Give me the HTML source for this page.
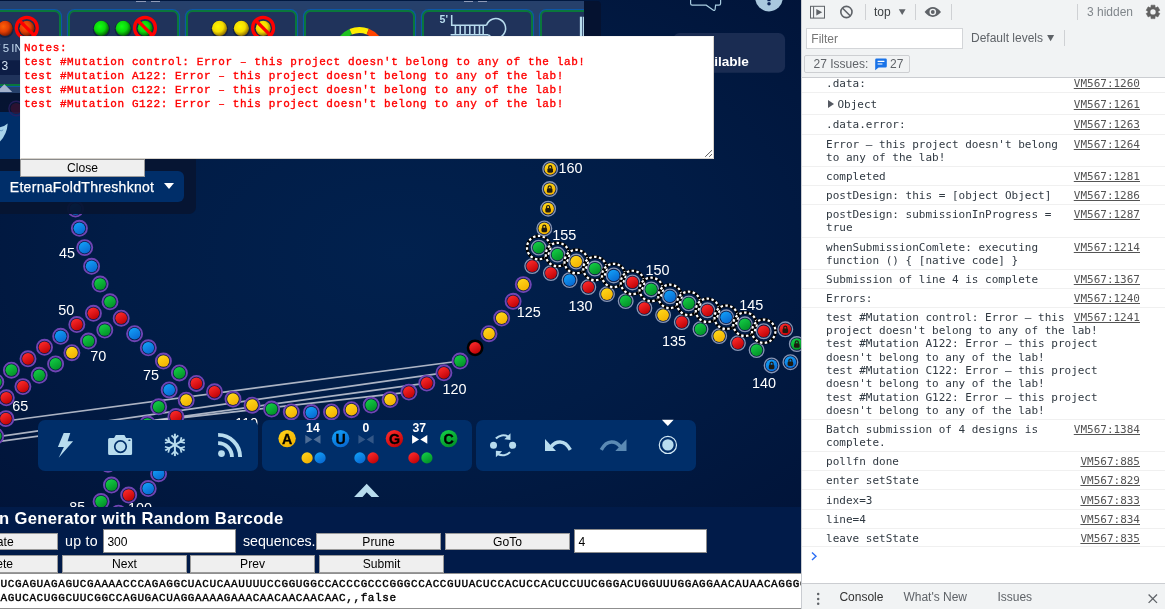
<!DOCTYPE html>
<html lang="en">
<head>
<meta charset="utf-8">
<title>Eterna – Mutation Generator with Random Barcode</title>
<style>
html,body{margin:0;padding:0;}
body{width:1165px;height:609px;overflow:hidden;position:relative;background:#011b49;font-family:"Liberation Sans",sans-serif;}
.abs{position:absolute;}
#dt,#notes,#seq,#title,.btn,.inp,.wt,#closebtn,#dd,#game{will-change:transform;}
#game{position:absolute;left:0;top:0;width:801px;height:507px;overflow:hidden;}
#gamesvg{position:absolute;left:0;top:0;}
/* top constraint bar */
#topdark{position:absolute;left:-10px;top:0.6px;width:611px;height:101px;background:#051230;border-radius:0 4px 9px 0;}
#topbar{position:absolute;left:0;top:1px;width:584px;height:91.5px;background:#26406b;overflow:hidden;}
.cbox{position:absolute;top:8.9px;width:107.6px;height:72px;border:2px solid #0a773c;border-radius:6.5px;background:#20335b;box-shadow:0 0 0 1.1px #0d56a6;}
.ball{position:absolute;width:15.4px;height:15.4px;border-radius:50%;top:20.6px;}
.nosign{position:absolute;width:19.6px;height:19.6px;border-radius:50%;border:3px solid #f00;top:15.4px;box-sizing:content-box;}
.nosign:after{content:"";position:absolute;left:8.3px;top:-1.2px;width:3px;height:22px;background:#f00;transform:rotate(-45deg);}
/* left panel */
#leftdark{position:absolute;left:-10px;top:92.5px;width:205.5px;height:121.8px;background:#061532;border-radius:0 0 7px 0;opacity:.96}
#leftblue{position:absolute;left:-10px;top:112.2px;width:110px;height:46.9px;background:#002e69;}
#dd{position:absolute;left:-10px;top:171.4px;width:194px;height:31px;background:#002e69;border-radius:6px;color:#fff;}
#dd span{-webkit-text-stroke:0.25px #fff;position:absolute;left:19.8px;top:7.9px;font-size:14px;white-space:nowrap;letter-spacing:0.3px}
#dd i{position:absolute;left:174.3px;top:12.4px;width:0;height:0;border-left:5.1px solid transparent;border-right:5.1px solid transparent;border-top:6.6px solid #fff;}
/* notes textarea */
#notes{position:absolute;left:20.1px;top:36.1px;width:694.1px;height:122.9px;box-sizing:border-box;background:#fff;border:1px solid #d6d2cc;border-top-color:#f4f4f4;border-left-color:#f4f4f4;color:#f00;font-family:"Liberation Mono",monospace;font-size:11px;letter-spacing:0.6px;line-height:14px;padding:4.3px 0 0 2.9px;-webkit-text-stroke:0.36px #f00;white-space:pre;overflow:hidden;}
#closebtn{position:absolute;left:20.1px;top:158.6px;width:124.9px;height:18.1px;box-sizing:border-box;background:#efefef;border:1px solid #9b9b9b;border-top:1.5px solid #8a8a8a;font-size:12.1px;color:#000;text-align:center;line-height:16.4px;}
/* toolbars */
.tb{position:absolute;top:420px;height:50.8px;background:#002e69;border-radius:7px;}
.ic{position:absolute;}
/* bottom html panel */
#bottom{position:absolute;left:0;top:506.5px;width:801px;height:103px;background:#011b49;}
#title{position:absolute;left:-1.5px;top:508.7px;font-size:16.6px;font-weight:bold;color:#fff;white-space:nowrap;letter-spacing:0.35px}
.btn{position:absolute;height:17.2px;width:125px;box-sizing:border-box;background:#efefef;border:1px solid #9a9a9a;border-radius:0;font-size:12.1px;color:#000;text-align:center;line-height:16.6px;}
.inp{position:absolute;height:23.5px;box-sizing:border-box;background:#fff;border:1px solid #8c8c8c;font-size:12.1px;color:#000;line-height:23.6px;padding-left:3.4px;padding-top:1px;text-align:left;}
.wt{position:absolute;color:#fff;font-size:14.2px;white-space:nowrap;}
#seq{-webkit-text-stroke:0.4px #000;position:absolute;left:-21.7px;top:573.3px;width:860px;height:35.7px;padding-top:3.3px;box-sizing:border-box;background:#fff;border:1px solid #8f8f8f;color:#000;font-family:"Liberation Mono",monospace;font-size:11px;letter-spacing:0.6px;line-height:14.1px;white-space:pre;overflow:hidden;}
/* devtools */
#dt{position:absolute;left:801px;top:0;width:364px;height:609px;background:#fff;font-family:"Liberation Sans",sans-serif;}
#dtbar{position:absolute;left:0;top:0;width:364px;height:77px;background:#f1f3f4;border-bottom:1px solid #cbcdd1;box-sizing:content-box;}
.vsep{position:absolute;width:1px;background:#cfd1d4;top:4px;height:16px;}
.dtt{position:absolute;font-size:12px;color:#5f6368;white-space:nowrap;}
.cl{position:absolute;left:25.1px;font-family:"DejaVu Sans Mono",monospace;font-size:11px;line-height:13.3px;color:#303942;white-space:pre;}
.lk{position:absolute;right:25px;font-family:"DejaVu Sans Mono",monospace;font-size:11px;line-height:13.3px;color:#545454;text-decoration:underline;white-space:pre;}
.sep{position:absolute;left:0;width:364px;height:1px;background:#f0f0f0;}
.tri{font-size:8px;color:#6e6e6e;font-family:"DejaVu Sans",sans-serif;position:relative;top:-1px}
#drawer{position:absolute;left:0;top:582.5px;width:364px;height:27px;background:#f1f3f4;border-top:1px solid #cbcdd1;}
</style>
</head>
<body>
<div id="game">
<svg id="gamesvg" width="801" height="507" viewBox="0 0 801 507">
<defs>
<radialGradient id="bg" cx="50%" cy="50%" r="72%"><stop offset="0" stop-color="#01214e"/><stop offset="0.5" stop-color="#011c46"/><stop offset="1" stop-color="#011439"/></radialGradient>
<linearGradient id="gA" x1="0.2" y1="0" x2="0.8" y2="1"><stop offset="0" stop-color="#ffd81a"/><stop offset="1" stop-color="#f2b000"/></linearGradient>
<linearGradient id="gU" x1="0.2" y1="0" x2="0.8" y2="1"><stop offset="0" stop-color="#12a0f8"/><stop offset="1" stop-color="#0866cf"/></linearGradient>
<linearGradient id="gG" x1="0.2" y1="0" x2="0.8" y2="1"><stop offset="0" stop-color="#ff2c2c"/><stop offset="1" stop-color="#bc0004"/></linearGradient>
<linearGradient id="gC" x1="0.2" y1="0" x2="0.8" y2="1"><stop offset="0" stop-color="#14cf46"/><stop offset="1" stop-color="#028e26"/></linearGradient>
</defs>
<rect width="801" height="507" fill="url(#bg)"/>
<line x1="460.1" y1="361" x2="6" y2="421.0" stroke="#dcdfe8" stroke-opacity="0.78" stroke-width="1.7"/>
<line x1="443.9" y1="372.8" x2="-4.3" y2="436.9" stroke="#dcdfe8" stroke-opacity="0.78" stroke-width="1.7"/>
<line x1="426.8" y1="383.1" x2="-10" y2="442.8" stroke="#dcdfe8" stroke-opacity="0.78" stroke-width="1.7"/>
<line x1="408.9" y1="392.1" x2="147.5" y2="421.6" stroke="#dcdfe8" stroke-opacity="0.78" stroke-width="1.7"/>
<circle cx="75.5" cy="209" r="7.55" fill="#0a1a45" stroke="#7045b4" stroke-width="1.85"/><circle cx="75.5" cy="209" r="5.85" fill="url(#gU)"/>
<circle cx="79.4" cy="228.3" r="7.55" fill="#0a1a45" stroke="#7045b4" stroke-width="1.85"/><circle cx="79.4" cy="228.3" r="5.85" fill="url(#gU)"/>
<circle cx="84.7" cy="247.6" r="7.55" fill="#0a1a45" stroke="#7045b4" stroke-width="1.85"/><circle cx="84.7" cy="247.6" r="5.85" fill="url(#gU)"/>
<circle cx="91.6" cy="266.3" r="7.55" fill="#0a1a45" stroke="#7045b4" stroke-width="1.85"/><circle cx="91.6" cy="266.3" r="5.85" fill="url(#gU)"/>
<circle cx="100.1" cy="284" r="7.55" fill="#0a1a45" stroke="#7045b4" stroke-width="1.85"/><circle cx="100.1" cy="284" r="5.85" fill="url(#gC)"/>
<circle cx="110" cy="301.8" r="7.55" fill="#0a1a45" stroke="#7045b4" stroke-width="1.85"/><circle cx="110" cy="301.8" r="5.85" fill="url(#gC)"/>
<circle cx="93.4" cy="313.3" r="7.55" fill="#0a1a45" stroke="#7045b4" stroke-width="1.85"/><circle cx="93.4" cy="313.3" r="5.85" fill="url(#gG)"/>
<circle cx="121.2" cy="318.2" r="7.55" fill="#0a1a45" stroke="#7045b4" stroke-width="1.85"/><circle cx="121.2" cy="318.2" r="5.85" fill="url(#gG)"/>
<circle cx="76.8" cy="324.5" r="7.55" fill="#0a1a45" stroke="#7045b4" stroke-width="1.85"/><circle cx="76.8" cy="324.5" r="5.85" fill="url(#gG)"/>
<circle cx="104.8" cy="330" r="7.55" fill="#0a1a45" stroke="#7045b4" stroke-width="1.85"/><circle cx="104.8" cy="330" r="5.85" fill="url(#gC)"/>
<circle cx="60.7" cy="336.3" r="7.55" fill="#0a1a45" stroke="#7045b4" stroke-width="1.85"/><circle cx="60.7" cy="336.3" r="5.85" fill="url(#gU)"/>
<circle cx="88.5" cy="341" r="7.55" fill="#0a1a45" stroke="#7045b4" stroke-width="1.85"/><circle cx="88.5" cy="341" r="5.85" fill="url(#gC)"/>
<circle cx="134.6" cy="333.7" r="7.55" fill="#0a1a45" stroke="#7045b4" stroke-width="1.85"/><circle cx="134.6" cy="333.7" r="5.85" fill="url(#gU)"/>
<circle cx="148.3" cy="347.8" r="7.55" fill="#0a1a45" stroke="#7045b4" stroke-width="1.85"/><circle cx="148.3" cy="347.8" r="5.85" fill="url(#gU)"/>
<circle cx="44.5" cy="347.3" r="7.55" fill="#0a1a45" stroke="#7045b4" stroke-width="1.85"/><circle cx="44.5" cy="347.3" r="5.85" fill="url(#gG)"/>
<circle cx="71.9" cy="352.7" r="7.55" fill="#0a1a45" stroke="#7045b4" stroke-width="1.85"/><circle cx="71.9" cy="352.7" r="5.85" fill="url(#gA)"/>
<circle cx="163.4" cy="361" r="7.55" fill="#0a1a45" stroke="#7045b4" stroke-width="1.85"/><circle cx="163.4" cy="361" r="5.85" fill="url(#gA)"/>
<circle cx="28" cy="358.8" r="7.55" fill="#0a1a45" stroke="#7045b4" stroke-width="1.85"/><circle cx="28" cy="358.8" r="5.85" fill="url(#gG)"/>
<circle cx="55.6" cy="363.9" r="7.55" fill="#0a1a45" stroke="#7045b4" stroke-width="1.85"/><circle cx="55.6" cy="363.9" r="5.85" fill="url(#gC)"/>
<circle cx="11.4" cy="370.2" r="7.55" fill="#0a1a45" stroke="#7045b4" stroke-width="1.85"/><circle cx="11.4" cy="370.2" r="5.85" fill="url(#gC)"/>
<circle cx="179.4" cy="372.9" r="7.55" fill="#0a1a45" stroke="#7045b4" stroke-width="1.85"/><circle cx="179.4" cy="372.9" r="5.85" fill="url(#gC)"/>
<circle cx="39.2" cy="375.3" r="7.55" fill="#0a1a45" stroke="#7045b4" stroke-width="1.85"/><circle cx="39.2" cy="375.3" r="5.85" fill="url(#gC)"/>
<circle cx="196.4" cy="383.4" r="7.55" fill="#0a1a45" stroke="#7045b4" stroke-width="1.85"/><circle cx="196.4" cy="383.4" r="5.85" fill="url(#gG)"/>
<circle cx="-4.2" cy="382" r="7.55" fill="#0a1a45" stroke="#7045b4" stroke-width="1.85"/><circle cx="-4.2" cy="382" r="5.85" fill="url(#gC)"/>
<circle cx="22.9" cy="386.6" r="7.55" fill="#0a1a45" stroke="#7045b4" stroke-width="1.85"/><circle cx="22.9" cy="386.6" r="5.85" fill="url(#gG)"/>
<circle cx="169.2" cy="389.9" r="7.55" fill="#0a1a45" stroke="#7045b4" stroke-width="1.85"/><circle cx="169.2" cy="389.9" r="5.85" fill="url(#gU)"/>
<circle cx="6.3" cy="397.8" r="7.55" fill="#0a1a45" stroke="#7045b4" stroke-width="1.85"/><circle cx="6.3" cy="397.8" r="5.85" fill="url(#gG)"/>
<circle cx="186.2" cy="400.2" r="7.55" fill="#0a1a45" stroke="#7045b4" stroke-width="1.85"/><circle cx="186.2" cy="400.2" r="5.85" fill="url(#gA)"/>
<circle cx="158.7" cy="406.8" r="7.55" fill="#0a1a45" stroke="#7045b4" stroke-width="1.85"/><circle cx="158.7" cy="406.8" r="5.85" fill="url(#gC)"/>
<circle cx="214.5" cy="391.8" r="7.55" fill="#0a1a45" stroke="#7045b4" stroke-width="1.85"/><circle cx="214.5" cy="391.8" r="5.85" fill="url(#gG)"/>
<circle cx="233" cy="399.1" r="7.55" fill="#0a1a45" stroke="#7045b4" stroke-width="1.85"/><circle cx="233" cy="399.1" r="5.85" fill="url(#gA)"/>
<circle cx="252.1" cy="405.2" r="7.55" fill="#0a1a45" stroke="#7045b4" stroke-width="1.85"/><circle cx="252.1" cy="405.2" r="5.85" fill="url(#gA)"/>
<circle cx="271.6" cy="409" r="7.55" fill="#0a1a45" stroke="#7045b4" stroke-width="1.85"/><circle cx="271.6" cy="409" r="5.85" fill="url(#gC)"/>
<circle cx="291.3" cy="411.9" r="7.55" fill="#0a1a45" stroke="#7045b4" stroke-width="1.85"/><circle cx="291.3" cy="411.9" r="5.85" fill="url(#gA)"/>
<circle cx="311.4" cy="412.5" r="7.55" fill="#0a1a45" stroke="#7045b4" stroke-width="1.85"/><circle cx="311.4" cy="412.5" r="5.85" fill="url(#gU)"/>
<circle cx="331.5" cy="411.9" r="7.55" fill="#0a1a45" stroke="#7045b4" stroke-width="1.85"/><circle cx="331.5" cy="411.9" r="5.85" fill="url(#gA)"/>
<circle cx="351.5" cy="409.7" r="7.55" fill="#0a1a45" stroke="#7045b4" stroke-width="1.85"/><circle cx="351.5" cy="409.7" r="5.85" fill="url(#gA)"/>
<circle cx="371.2" cy="405.1" r="7.55" fill="#0a1a45" stroke="#7045b4" stroke-width="1.85"/><circle cx="371.2" cy="405.1" r="5.85" fill="url(#gC)"/>
<circle cx="390.1" cy="399.6" r="7.55" fill="#0a1a45" stroke="#7045b4" stroke-width="1.85"/><circle cx="390.1" cy="399.6" r="5.85" fill="url(#gA)"/>
<circle cx="408.9" cy="392.1" r="7.55" fill="#0a1a45" stroke="#7045b4" stroke-width="1.85"/><circle cx="408.9" cy="392.1" r="5.85" fill="url(#gG)"/>
<circle cx="426.8" cy="383.1" r="7.55" fill="#0a1a45" stroke="#7045b4" stroke-width="1.85"/><circle cx="426.8" cy="383.1" r="5.85" fill="url(#gG)"/>
<circle cx="443.9" cy="372.8" r="7.55" fill="#0a1a45" stroke="#7045b4" stroke-width="1.85"/><circle cx="443.9" cy="372.8" r="5.85" fill="url(#gG)"/>
<circle cx="460.1" cy="361" r="7.55" fill="#0a1a45" stroke="#7045b4" stroke-width="1.85"/><circle cx="460.1" cy="361" r="5.85" fill="url(#gC)"/>
<circle cx="489" cy="333.7" r="7.55" fill="#0a1a45" stroke="#7045b4" stroke-width="1.85"/><circle cx="489" cy="333.7" r="5.85" fill="url(#gA)"/>
<circle cx="501.7" cy="318.1" r="7.55" fill="#0a1a45" stroke="#7045b4" stroke-width="1.85"/><circle cx="501.7" cy="318.1" r="5.85" fill="url(#gA)"/>
<circle cx="513.1" cy="301.3" r="7.55" fill="#0a1a45" stroke="#7045b4" stroke-width="1.85"/><circle cx="513.1" cy="301.3" r="5.85" fill="url(#gG)"/>
<circle cx="523.3" cy="284.6" r="7.55" fill="#0a1a45" stroke="#7045b4" stroke-width="1.85"/><circle cx="523.3" cy="284.6" r="5.85" fill="url(#gA)"/>
<circle cx="175.9" cy="416.5" r="7.55" fill="#0a1a45" stroke="#7045b4" stroke-width="1.85"/><circle cx="175.9" cy="416.5" r="5.85" fill="url(#gG)"/>
<circle cx="147.5" cy="424" r="7.55" fill="#0a1a45" stroke="#7045b4" stroke-width="1.85"/><circle cx="147.5" cy="424" r="5.85" fill="url(#gC)"/>
<circle cx="5.9" cy="418.6" r="7.55" fill="#0a1a45" stroke="#7045b4" stroke-width="1.85"/><circle cx="5.9" cy="418.6" r="5.85" fill="url(#gG)"/>
<circle cx="-4.3" cy="436.2" r="7.55" fill="#0a1a45" stroke="#7045b4" stroke-width="1.85"/><circle cx="-4.3" cy="436.2" r="5.85" fill="url(#gC)"/>
<circle cx="108" cy="464.3" r="7.55" fill="#0a1a45" stroke="#7045b4" stroke-width="1.85"/><circle cx="108" cy="464.3" r="5.85" fill="url(#gU)"/>
<circle cx="111.5" cy="485" r="7.55" fill="#0a1a45" stroke="#7045b4" stroke-width="1.85"/><circle cx="111.5" cy="485" r="5.85" fill="url(#gC)"/>
<circle cx="101.1" cy="501.5" r="7.55" fill="#0a1a45" stroke="#7045b4" stroke-width="1.85"/><circle cx="101.1" cy="501.5" r="5.85" fill="url(#gC)"/>
<circle cx="128.7" cy="495" r="7.55" fill="#0a1a45" stroke="#7045b4" stroke-width="1.85"/><circle cx="128.7" cy="495" r="5.85" fill="url(#gG)"/>
<circle cx="148.2" cy="488.5" r="7.55" fill="#0a1a45" stroke="#7045b4" stroke-width="1.85"/><circle cx="148.2" cy="488.5" r="5.85" fill="url(#gU)"/>
<circle cx="158.6" cy="473.7" r="7.55" fill="#0a1a45" stroke="#7045b4" stroke-width="1.85"/><circle cx="158.6" cy="473.7" r="5.85" fill="url(#gU)"/>
<circle cx="118.5" cy="513.2" r="7.55" fill="#0a1a45" stroke="#7045b4" stroke-width="1.85"/><circle cx="118.5" cy="513.2" r="5.85" fill="url(#gU)"/>
<circle cx="475.1" cy="347.8" r="7.6" fill="#000" stroke="#000" stroke-width="1.6"/><circle cx="475.1" cy="347.8" r="5.85" fill="url(#gG)"/>
<circle cx="532.2" cy="266.1" r="7.3" fill="#0a1a45" stroke="#8795b4" stroke-width="1.35"/><circle cx="532.2" cy="266.1" r="5.85" fill="url(#gG)"/>
<circle cx="550.9000000000001" cy="273.1" r="7.3" fill="#0a1a45" stroke="#8795b4" stroke-width="1.35"/><circle cx="550.9000000000001" cy="273.1" r="5.85" fill="url(#gG)"/>
<circle cx="569.6" cy="280.1" r="7.3" fill="#0a1a45" stroke="#8795b4" stroke-width="1.35"/><circle cx="569.6" cy="280.1" r="5.85" fill="url(#gU)"/>
<circle cx="588.3000000000001" cy="287.1" r="7.3" fill="#0a1a45" stroke="#8795b4" stroke-width="1.35"/><circle cx="588.3000000000001" cy="287.1" r="5.85" fill="url(#gG)"/>
<circle cx="607.0" cy="294.1" r="7.3" fill="#0a1a45" stroke="#8795b4" stroke-width="1.35"/><circle cx="607.0" cy="294.1" r="5.85" fill="url(#gA)"/>
<circle cx="625.7" cy="301.1" r="7.3" fill="#0a1a45" stroke="#8795b4" stroke-width="1.35"/><circle cx="625.7" cy="301.1" r="5.85" fill="url(#gC)"/>
<circle cx="644.4000000000001" cy="308.1" r="7.3" fill="#0a1a45" stroke="#8795b4" stroke-width="1.35"/><circle cx="644.4000000000001" cy="308.1" r="5.85" fill="url(#gG)"/>
<circle cx="663.1" cy="315.1" r="7.3" fill="#0a1a45" stroke="#8795b4" stroke-width="1.35"/><circle cx="663.1" cy="315.1" r="5.85" fill="url(#gA)"/>
<circle cx="681.8000000000001" cy="322.1" r="7.3" fill="#0a1a45" stroke="#8795b4" stroke-width="1.35"/><circle cx="681.8000000000001" cy="322.1" r="5.85" fill="url(#gG)"/>
<circle cx="700.5" cy="329.1" r="7.3" fill="#0a1a45" stroke="#8795b4" stroke-width="1.35"/><circle cx="700.5" cy="329.1" r="5.85" fill="url(#gC)"/>
<circle cx="719.2" cy="336.1" r="7.3" fill="#0a1a45" stroke="#8795b4" stroke-width="1.35"/><circle cx="719.2" cy="336.1" r="5.85" fill="url(#gA)"/>
<circle cx="737.9000000000001" cy="343.1" r="7.3" fill="#0a1a45" stroke="#8795b4" stroke-width="1.35"/><circle cx="737.9000000000001" cy="343.1" r="5.85" fill="url(#gG)"/>
<circle cx="756.6" cy="350.1" r="7.3" fill="#0a1a45" stroke="#8795b4" stroke-width="1.35"/><circle cx="756.6" cy="350.1" r="5.85" fill="url(#gC)"/>
<circle cx="538.7" cy="247.6" r="11.7" fill="none" stroke="#000" stroke-width="3.0"/><circle cx="538.7" cy="247.6" r="11.7" fill="none" stroke="#fff" stroke-width="2.2" stroke-dasharray="2.5 2.4"/><circle cx="538.7" cy="247.6" r="7.3" fill="#0a1a45" stroke="#8795b4" stroke-width="1.35"/><circle cx="538.7" cy="247.6" r="5.85" fill="url(#gC)"/>
<circle cx="557.45" cy="254.57" r="11.7" fill="none" stroke="#000" stroke-width="3.0"/><circle cx="557.45" cy="254.57" r="11.7" fill="none" stroke="#fff" stroke-width="2.2" stroke-dasharray="2.5 2.4"/><circle cx="557.45" cy="254.57" r="7.3" fill="#0a1a45" stroke="#8795b4" stroke-width="1.35"/><circle cx="557.45" cy="254.57" r="5.85" fill="url(#gC)"/>
<circle cx="576.2" cy="261.54" r="11.7" fill="none" stroke="#000" stroke-width="3.0"/><circle cx="576.2" cy="261.54" r="11.7" fill="none" stroke="#fff" stroke-width="2.2" stroke-dasharray="2.5 2.4"/><circle cx="576.2" cy="261.54" r="7.3" fill="#0a1a45" stroke="#8795b4" stroke-width="1.35"/><circle cx="576.2" cy="261.54" r="5.85" fill="url(#gA)"/>
<circle cx="594.95" cy="268.51" r="11.7" fill="none" stroke="#000" stroke-width="3.0"/><circle cx="594.95" cy="268.51" r="11.7" fill="none" stroke="#fff" stroke-width="2.2" stroke-dasharray="2.5 2.4"/><circle cx="594.95" cy="268.51" r="7.3" fill="#0a1a45" stroke="#8795b4" stroke-width="1.35"/><circle cx="594.95" cy="268.51" r="5.85" fill="url(#gC)"/>
<circle cx="613.7" cy="275.48" r="11.7" fill="none" stroke="#000" stroke-width="3.0"/><circle cx="613.7" cy="275.48" r="11.7" fill="none" stroke="#fff" stroke-width="2.2" stroke-dasharray="2.5 2.4"/><circle cx="613.7" cy="275.48" r="7.3" fill="#0a1a45" stroke="#8795b4" stroke-width="1.35"/><circle cx="613.7" cy="275.48" r="5.85" fill="url(#gU)"/>
<circle cx="632.45" cy="282.45" r="11.7" fill="none" stroke="#000" stroke-width="3.0"/><circle cx="632.45" cy="282.45" r="11.7" fill="none" stroke="#fff" stroke-width="2.2" stroke-dasharray="2.5 2.4"/><circle cx="632.45" cy="282.45" r="7.3" fill="#0a1a45" stroke="#8795b4" stroke-width="1.35"/><circle cx="632.45" cy="282.45" r="5.85" fill="url(#gG)"/>
<circle cx="651.2" cy="289.42" r="11.7" fill="none" stroke="#000" stroke-width="3.0"/><circle cx="651.2" cy="289.42" r="11.7" fill="none" stroke="#fff" stroke-width="2.2" stroke-dasharray="2.5 2.4"/><circle cx="651.2" cy="289.42" r="7.3" fill="#0a1a45" stroke="#8795b4" stroke-width="1.35"/><circle cx="651.2" cy="289.42" r="5.85" fill="url(#gC)"/>
<circle cx="669.95" cy="296.39" r="11.7" fill="none" stroke="#000" stroke-width="3.0"/><circle cx="669.95" cy="296.39" r="11.7" fill="none" stroke="#fff" stroke-width="2.2" stroke-dasharray="2.5 2.4"/><circle cx="669.95" cy="296.39" r="7.3" fill="#0a1a45" stroke="#8795b4" stroke-width="1.35"/><circle cx="669.95" cy="296.39" r="5.85" fill="url(#gU)"/>
<circle cx="688.7" cy="303.36" r="11.7" fill="none" stroke="#000" stroke-width="3.0"/><circle cx="688.7" cy="303.36" r="11.7" fill="none" stroke="#fff" stroke-width="2.2" stroke-dasharray="2.5 2.4"/><circle cx="688.7" cy="303.36" r="7.3" fill="#0a1a45" stroke="#8795b4" stroke-width="1.35"/><circle cx="688.7" cy="303.36" r="5.85" fill="url(#gC)"/>
<circle cx="707.45" cy="310.33" r="11.7" fill="none" stroke="#000" stroke-width="3.0"/><circle cx="707.45" cy="310.33" r="11.7" fill="none" stroke="#fff" stroke-width="2.2" stroke-dasharray="2.5 2.4"/><circle cx="707.45" cy="310.33" r="7.3" fill="#0a1a45" stroke="#8795b4" stroke-width="1.35"/><circle cx="707.45" cy="310.33" r="5.85" fill="url(#gG)"/>
<circle cx="726.2" cy="317.3" r="11.7" fill="none" stroke="#000" stroke-width="3.0"/><circle cx="726.2" cy="317.3" r="11.7" fill="none" stroke="#fff" stroke-width="2.2" stroke-dasharray="2.5 2.4"/><circle cx="726.2" cy="317.3" r="7.3" fill="#0a1a45" stroke="#8795b4" stroke-width="1.35"/><circle cx="726.2" cy="317.3" r="5.85" fill="url(#gU)"/>
<circle cx="744.95" cy="324.27" r="11.7" fill="none" stroke="#000" stroke-width="3.0"/><circle cx="744.95" cy="324.27" r="11.7" fill="none" stroke="#fff" stroke-width="2.2" stroke-dasharray="2.5 2.4"/><circle cx="744.95" cy="324.27" r="7.3" fill="#0a1a45" stroke="#8795b4" stroke-width="1.35"/><circle cx="744.95" cy="324.27" r="5.85" fill="url(#gC)"/>
<circle cx="763.7" cy="331.24" r="11.7" fill="none" stroke="#000" stroke-width="3.0"/><circle cx="763.7" cy="331.24" r="11.7" fill="none" stroke="#fff" stroke-width="2.2" stroke-dasharray="2.5 2.4"/><circle cx="763.7" cy="331.24" r="7.3" fill="#0a1a45" stroke="#8795b4" stroke-width="1.35"/><circle cx="763.7" cy="331.24" r="5.85" fill="url(#gG)"/>
<circle cx="550.2" cy="168.9" r="7.3" fill="#0a1a45" stroke="#8795b4" stroke-width="1.35"/><circle cx="550.2" cy="168.9" r="5.85" fill="url(#gA)"/>
<g transform="translate(550.2,168.9)" fill="#1e1a10"><rect x="-2.8" y="-0.7" width="5.6" height="4.5" rx="1.4"/><path d="M-1.5,-0.4 v-1.3 a1.5,1.5 0 0 1 3,0 v1.3" fill="none" stroke="#1e1a10" stroke-width="1.2"/></g>
<circle cx="549.7" cy="189" r="7.3" fill="#0a1a45" stroke="#8795b4" stroke-width="1.35"/><circle cx="549.7" cy="189" r="5.85" fill="url(#gA)"/>
<g transform="translate(549.7,189)" fill="#1e1a10"><rect x="-2.8" y="-0.7" width="5.6" height="4.5" rx="1.4"/><path d="M-1.5,-0.4 v-1.3 a1.5,1.5 0 0 1 3,0 v1.3" fill="none" stroke="#1e1a10" stroke-width="1.2"/></g>
<circle cx="548.1" cy="208.7" r="7.3" fill="#0a1a45" stroke="#8795b4" stroke-width="1.35"/><circle cx="548.1" cy="208.7" r="5.85" fill="url(#gA)"/>
<g transform="translate(548.1,208.7)" fill="#1e1a10"><rect x="-2.8" y="-0.7" width="5.6" height="4.5" rx="1.4"/><path d="M-1.5,-0.4 v-1.3 a1.5,1.5 0 0 1 3,0 v1.3" fill="none" stroke="#1e1a10" stroke-width="1.2"/></g>
<circle cx="544.3" cy="228.4" r="7.3" fill="#0a1a45" stroke="#8795b4" stroke-width="1.35"/><circle cx="544.3" cy="228.4" r="5.85" fill="url(#gA)"/>
<g transform="translate(544.3,228.4)" fill="#1e1a10"><rect x="-2.8" y="-0.7" width="5.6" height="4.5" rx="1.4"/><path d="M-1.5,-0.4 v-1.3 a1.5,1.5 0 0 1 3,0 v1.3" fill="none" stroke="#1e1a10" stroke-width="1.2"/></g>
<circle cx="785.3" cy="329.3" r="7.3" fill="#0a1a45" stroke="#8795b4" stroke-width="1.35"/><circle cx="785.3" cy="329.3" r="5.85" fill="url(#gG)"/>
<g transform="translate(785.3,329.3)" fill="#1e1a10"><rect x="-2.8" y="-0.7" width="5.6" height="4.5" rx="1.4"/><path d="M-1.5,-0.4 v-1.3 a1.5,1.5 0 0 1 3,0 v1.3" fill="none" stroke="#1e1a10" stroke-width="1.2"/></g>
<circle cx="796.8" cy="344" r="7.3" fill="#0a1a45" stroke="#8795b4" stroke-width="1.35"/><circle cx="796.8" cy="344" r="5.85" fill="url(#gC)"/>
<g transform="translate(796.8,344)" fill="#1e1a10"><rect x="-2.8" y="-0.7" width="5.6" height="4.5" rx="1.4"/><path d="M-1.5,-0.4 v-1.3 a1.5,1.5 0 0 1 3,0 v1.3" fill="none" stroke="#1e1a10" stroke-width="1.2"/></g>
<circle cx="790.4" cy="362.2" r="7.3" fill="#0a1a45" stroke="#8795b4" stroke-width="1.35"/><circle cx="790.4" cy="362.2" r="5.85" fill="url(#gU)"/>
<g transform="translate(790.4,362.2)" fill="#1e1a10"><rect x="-2.8" y="-0.7" width="5.6" height="4.5" rx="1.4"/><path d="M-1.5,-0.4 v-1.3 a1.5,1.5 0 0 1 3,0 v1.3" fill="none" stroke="#1e1a10" stroke-width="1.2"/></g>
<circle cx="771.6" cy="365.4" r="7.3" fill="#0a1a45" stroke="#8795b4" stroke-width="1.35"/><circle cx="771.6" cy="365.4" r="5.85" fill="url(#gU)"/>
<g transform="translate(771.6,365.4)" fill="#1e1a10"><rect x="-2.8" y="-0.7" width="5.6" height="4.5" rx="1.4"/><path d="M-1.5,-0.4 v-1.3 a1.5,1.5 0 0 1 3,0 v1.3" fill="none" stroke="#1e1a10" stroke-width="1.2"/></g>
<g font-family="'Liberation Sans', sans-serif" font-size="14.4" fill="#fff" text-anchor="middle">
<text x="67" y="258.2">45</text>
<text x="66.2" y="314.6">50</text>
<text x="98.2" y="360.9">70</text>
<text x="151" y="380.0">75</text>
<text x="20.2" y="410.7">65</text>
<text x="454.5" y="394.3">120</text>
<text x="528.7" y="316.7">125</text>
<text x="580.4" y="311.2">130</text>
<text x="673.9" y="345.9">135</text>
<text x="764" y="388.0">140</text>
<text x="751.2" y="310.1">145</text>
<text x="657.4" y="274.9">150</text>
<text x="564.2" y="240.1">155</text>
<text x="570.4" y="173.0">160</text>
<text x="246.5" y="428.1">110</text>
<text x="77.3" y="512.2">85</text>
<text x="140" y="512.9">100</text>
</g>
</svg>
<!-- top constraints -->
<div id="topdark"></div>
<div id="topbar">
  <div class="abs" style="left:136px;top:0px;width:10px;height:1px;background:#8f9bb8"></div><div class="abs" style="left:463.6px;top:0px;width:9.6px;height:1px;background:#8f9bb8"></div><div class="abs" style="left:478px;top:0px;width:9px;height:1px;background:#8f9bb8"></div>
  <div class="abs" style="left:151.3px;top:0px;width:8.7px;height:1px;background:#8f9bb8"></div>
  <div class="cbox" style="left:-50.2px"></div>
  <div class="cbox" style="left:67.8px"></div>
  <div class="cbox" style="left:185.8px"></div>
  <div class="cbox" style="left:303.8px"></div>
  <div class="cbox" style="left:421.8px"></div>
  <div class="cbox" style="left:539.8px;width:60px;border-right:none;border-radius:6px 0 0 6px"></div>
</div>
<svg class="abs" style="left:0;top:0" width="801" height="110" viewBox="0 0 801 110">
<defs>
<radialGradient id="bo" cx="0.38" cy="0.38" r="0.65"><stop offset="0" stop-color="#ff6008"/><stop offset="0.55" stop-color="#e23e04"/><stop offset="1" stop-color="#7c1c02"/></radialGradient>
<radialGradient id="bgn" cx="0.4" cy="0.38" r="0.65"><stop offset="0" stop-color="#12ff12"/><stop offset="0.55" stop-color="#0cd60c"/><stop offset="1" stop-color="#045c04"/></radialGradient>
<radialGradient id="by" cx="0.4" cy="0.38" r="0.65"><stop offset="0" stop-color="#fff600"/><stop offset="0.55" stop-color="#f4dc00"/><stop offset="1" stop-color="#8a6a00"/></radialGradient>
</defs>
<circle cx="-16.8" cy="29.2" r="8.6" fill="#0a1430" opacity="0.55"/><circle cx="-16.8" cy="28.3" r="7.6" fill="url(#bo)"/><circle cx="5.1" cy="29.2" r="8.6" fill="#0a1430" opacity="0.55"/><circle cx="5.1" cy="28.3" r="7.6" fill="url(#bo)"/><circle cx="27.0" cy="29.2" r="8.6" fill="#0a1430" opacity="0.55"/><circle cx="27.0" cy="28.3" r="7.6" fill="url(#bo)"/><circle cx="26.8" cy="27.9" r="10.5" fill="none" stroke="#f00" stroke-width="3.2"/><line x1="19.4" y1="20.5" x2="34.2" y2="35.3" stroke="#f00" stroke-width="3.2"/>
<circle cx="101.4" cy="29.2" r="8.6" fill="#0a1430" opacity="0.55"/><circle cx="101.4" cy="28.3" r="7.6" fill="url(#bgn)"/><circle cx="123.3" cy="29.2" r="8.6" fill="#0a1430" opacity="0.55"/><circle cx="123.3" cy="28.3" r="7.6" fill="url(#bgn)"/><circle cx="145.2" cy="29.2" r="8.6" fill="#0a1430" opacity="0.55"/><circle cx="145.2" cy="28.3" r="7.6" fill="url(#bgn)"/><circle cx="145.0" cy="27.9" r="10.5" fill="none" stroke="#f00" stroke-width="3.2"/><line x1="137.6" y1="20.5" x2="152.4" y2="35.3" stroke="#f00" stroke-width="3.2"/>
<circle cx="219.5" cy="29.2" r="8.6" fill="#0a1430" opacity="0.55"/><circle cx="219.5" cy="28.3" r="7.6" fill="url(#by)"/><circle cx="241.4" cy="29.2" r="8.6" fill="#0a1430" opacity="0.55"/><circle cx="241.4" cy="28.3" r="7.6" fill="url(#by)"/><circle cx="263.3" cy="29.2" r="8.6" fill="#0a1430" opacity="0.55"/><circle cx="263.3" cy="28.3" r="7.6" fill="url(#by)"/><circle cx="263.1" cy="27.9" r="10.5" fill="none" stroke="#f00" stroke-width="3.2"/><line x1="255.7" y1="20.5" x2="270.5" y2="35.3" stroke="#f00" stroke-width="3.2"/>
<path d="M337.83,48.18 A22,22 0 0 1 350.73,31.82" fill="none" stroke="#1fc01f" stroke-width="6"/>
<path d="M350.73,31.82 A22,22 0 0 1 367.74,31.60" fill="none" stroke="#ffee00" stroke-width="6"/>
<path d="M367.74,31.60 A22,22 0 0 1 381.17,48.18" fill="none" stroke="#ff4400" stroke-width="6"/>
<g fill="none" stroke="#b8dcee" stroke-width="1.55">
<path d="M451.7,14.9 V25.2 H486.5"/>
<path d="M450.6,34.8 H488.4"/>
<path d="M455.4,25.2 V34.8"/>
<path d="M460.2,25.2 V34.8"/>
<path d="M465,25.2 V34.8"/>
<path d="M469.8,25.2 V34.8"/>
<path d="M474.6,25.2 V34.8"/>
<path d="M479.5,25.2 V34.8"/>
<path d="M483.2,25.2 V34.8"/>
<path d="M486.5,25.2 A9.8,9.8 0 1 1 488.4,34.8"/>
<path d="M581,16.7 V40" stroke-width="2.3"/><path d="M583.4,16.7 V40" stroke-width="1.1"/>
</g>
<text x="439.6" y="22.8" font-family="'Liberation Sans',sans-serif" font-weight="bold" font-size="10.6" fill="#b8dcee">5'</text>
<text x="-6.4" y="52.3" font-family="'Liberation Sans',sans-serif" font-size="11.4" fill="#c4daf0" word-spacing="-0.9" style="white-space:pre">T 5 IN A ROW</text>
<rect x="-30" y="60.3" width="70" height="14.7" fill="#0d1d45"/>
<text x="1.6" y="70.4" font-family="'Liberation Sans',sans-serif" font-size="12" fill="#d4e2f2">3</text>
<path d="M-3.4,91.9 L4.4,84.3 L12.2,91.9 Z" fill="#a4b2cc"/>
<path d="M690.6,-4 V3.6 Q690.6,5.2 692.2,5.2 H706.2 L713.4,10.2 Q714.8,10.9 715.1,9.4 L715.6,5.2 H719 Q720.6,5.2 720.6,3.6 V-4" fill="none" stroke="#a8cce0" stroke-width="1.2"/>
<circle cx="769" cy="-2.4" r="13.8" fill="#a9c8de"/>
<circle cx="769" cy="3.7" r="1.75" fill="#0c2356"/>
<rect x="767.4" y="-4" width="3.2" height="5.2" fill="#0c2356"/>
<rect x="673.1" y="33.1" width="112" height="39.6" rx="6.5" fill="#1a2c52"/>
<text x="748.9" y="65.5" text-anchor="end" font-family="'Liberation Sans',sans-serif" font-weight="bold" font-size="13.6" fill="#fff">Unavailable</text>
</svg>
<!-- left panel -->
<div id="leftdark"></div>
<div id="leftblue"></div>
<svg class="abs" style="left:0;top:95px" width="30" height="60" viewBox="0 95 30 60"><circle cx="16.2" cy="108.5" r="7.3" fill="none" stroke="#2b1f63" stroke-width="1.4" opacity="0.8"/><circle cx="16.2" cy="108.5" r="5.6" fill="#3a1232" opacity="0.75"/><path d="M0,127.2 Q4.5,126.6 7.7,123.6 Q7,134.5 0,141.6 Z" fill="#a8d4ec"/><path d="M0,130.5 Q2.2,131.5 3.2,129.6" stroke="#5f93bf" stroke-width="0.9" fill="none"/></svg>
<div id="dd"><span>EternaFoldThreshknot</span><i></i></div>
</div>

<div id="notes">Notes:
test #Mutation control: Error – this project doesn't belong to any of the lab!
test #Mutation A122: Error – this project doesn't belong to any of the lab!
test #Mutation C122: Error – this project doesn't belong to any of the lab!
test #Mutation G122: Error – this project doesn't belong to any of the lab!</div>
<svg class="abs" style="left:700px;top:146px" width="14" height="13" viewBox="700 146 14 13"><path d="M705.2,156.8 L712,150.2 M709.2,156.8 L712,154.1" stroke="#4a4a4a" stroke-width="0.9" fill="none"/></svg>
<div id="closebtn">Close</div>

<!-- toolbars -->
<div class="tb" style="left:38.3px;width:219.3px"></div>
<div class="tb" style="left:262.2px;width:210px"></div>
<div class="tb" style="left:476px;width:220.2px"></div>

<svg class="abs" style="left:0;top:410px" width="801" height="97" viewBox="0 410 801 97">
<defs>
<linearGradient id="tA" x1="0.2" y1="0" x2="0.8" y2="1"><stop offset="0" stop-color="#ffd21a"/><stop offset="1" stop-color="#f0b000"/></linearGradient>
<linearGradient id="tU" x1="0.2" y1="0" x2="0.8" y2="1"><stop offset="0" stop-color="#12a0f8"/><stop offset="1" stop-color="#0866cf"/></linearGradient>
<linearGradient id="tG" x1="0.2" y1="0" x2="0.8" y2="1"><stop offset="0" stop-color="#ff2c2c"/><stop offset="1" stop-color="#bc0004"/></linearGradient>
<linearGradient id="tC" x1="0.2" y1="0" x2="0.8" y2="1"><stop offset="0" stop-color="#14cf46"/><stop offset="1" stop-color="#028e26"/></linearGradient>
</defs>
<path d="M63.7,433 L70.3,433 L67.6,441.3 L73.1,441.3 L58.7,457.8 L63.9,446.9 L57.9,446.9 Z" fill="#b8dcee"/>
<path d="M109.6,438 H114.1 L115.8,435 H124.4 L126.1,438 H130.6 Q132.1,438 132.1,439.5 V453.5 Q132.1,455 130.6,455 H109.6 Q108.1,455 108.1,453.5 V439.5 Q108.1,438 109.6,438 Z" fill="#b8dcee"/>
<circle cx="120.5" cy="446.6" r="5.75" fill="none" stroke="#002e69" stroke-width="1.7"/>
<ellipse cx="129.4" cy="440.2" rx="1.2" ry="0.8" fill="#002e69"/>
<g stroke="#b8dcee" stroke-width="2" fill="none" stroke-linecap="butt"><path d="M174.90,444.90 L174.90,433.70"/><path d="M171.50,435.30 L174.90,438.70 L178.30,435.30" stroke-width="1.7"/><path d="M174.90,444.90 L184.60,439.30"/><path d="M181.51,437.16 L180.27,441.80 L184.91,443.04" stroke-width="1.7"/><path d="M174.90,444.90 L184.60,450.50"/><path d="M184.91,446.76 L180.27,448.00 L181.51,452.64" stroke-width="1.7"/><path d="M174.90,444.90 L174.90,456.10"/><path d="M178.30,454.50 L174.90,451.10 L171.50,454.50" stroke-width="1.7"/><path d="M174.90,444.90 L165.20,450.50"/><path d="M168.29,452.64 L169.53,448.00 L164.89,446.76" stroke-width="1.7"/><path d="M174.90,444.90 L165.20,439.30"/><path d="M164.89,443.04 L169.53,441.80 L168.29,437.16" stroke-width="1.7"/></g>
<circle cx="221.5" cy="453.6" r="3.4" fill="#b8dcee"/>
<path d="M218.1,443.09999999999997 A13.8,13.8 0 0 1 231.9,456.9" fill="none" stroke="#b8dcee" stroke-width="3.9"/>
<path d="M218.1,434.9 A22,22 0 0 1 240.1,456.9" fill="none" stroke="#b8dcee" stroke-width="3.9"/>
<circle cx="287.1" cy="438.6" r="8.7" fill="url(#tA)"/><text x="287.1" y="443.7" text-anchor="middle" font-family="'Liberation Sans',sans-serif" font-weight="bold" font-size="14.2" fill="#000" stroke="#000" stroke-width="0.3">A</text>
<circle cx="340.6" cy="438.6" r="8.7" fill="url(#tU)"/><text x="340.6" y="443.7" text-anchor="middle" font-family="'Liberation Sans',sans-serif" font-weight="bold" font-size="14.2" fill="#000" stroke="#000" stroke-width="0.3">U</text>
<circle cx="394.4" cy="438.6" r="8.7" fill="url(#tG)"/><text x="394.4" y="443.7" text-anchor="middle" font-family="'Liberation Sans',sans-serif" font-weight="bold" font-size="14.2" fill="#000" stroke="#000" stroke-width="0.3">G</text>
<circle cx="448.7" cy="438.6" r="8.7" fill="url(#tC)"/><text x="448.7" y="443.7" text-anchor="middle" font-family="'Liberation Sans',sans-serif" font-weight="bold" font-size="14.2" fill="#000" stroke="#000" stroke-width="0.3">C</text>
<path d="M305.3,435 L312.3,439.4 L305.3,443.8 Z M320.5,435 L313.5,439.4 L320.5,443.8 Z" fill="#fff" opacity="0.3"/>
<path d="M358.4,435 L365.4,439.4 L358.4,443.8 Z M373.6,435 L366.6,439.4 L373.6,443.8 Z" fill="#fff" opacity="0.2"/>
<path d="M412.09999999999997,435 L419.09999999999997,439.4 L412.09999999999997,443.8 Z M427.3,435 L420.3,439.4 L427.3,443.8 Z" fill="#fff" opacity="1"/>
<g font-family="'Liberation Sans',sans-serif" font-weight="bold" font-size="12.2" fill="#fff" text-anchor="middle">
<text x="312.9" y="432">14</text><text x="366" y="432">0</text><text x="419.3" y="432">37</text></g>
<circle cx="307.1" cy="457.9" r="5.6" fill="url(#tA)"/><circle cx="320.1" cy="457.9" r="5.6" fill="url(#tU)"/><circle cx="359.9" cy="457.9" r="5.6" fill="url(#tU)"/><circle cx="373" cy="457.9" r="5.6" fill="url(#tG)"/><circle cx="413.9" cy="457.9" r="5.6" fill="url(#tG)"/><circle cx="426.9" cy="457.9" r="5.6" fill="url(#tC)"/>
<circle cx="493.5" cy="445.3" r="3.5" fill="#b8dcee"/><circle cx="512.6" cy="445.3" r="3.5" fill="#b8dcee"/>
<path d="M495.9,438.5 A10.1,10.1 0 0 1 508.2,436.6" fill="none" stroke="#b8dcee" stroke-width="2.1"/>
<path d="M510.5,433.3 L510.5,439.9 L504.3,439.3 Z" fill="#b8dcee"/>
<path d="M510.1,452.1 A10.1,10.1 0 0 1 497.8,454" fill="none" stroke="#b8dcee" stroke-width="2.1"/>
<path d="M495.9,457.3 L495.9,450.7 L502.1,451.3 Z" fill="#b8dcee"/>
<path d="M545,438.9 L545,450.9 L556,450.9 Z" fill="#b8dcee"/>
<path d="M551.2,446.6 C555.5,441 564.5,438.6 570.3,449.9" fill="none" stroke="#b8dcee" stroke-width="3.5"/>
<path d="M626.5,439.3 L626.5,450.9 L615.3,450.9 Z" fill="#5b8ab4"/>
<path d="M620.4,446.6 C616.1,441 607.1,438.6 601.3,449.9" fill="none" stroke="#5b8ab4" stroke-width="3.5"/>
<circle cx="667.9" cy="444.9" r="8.6" fill="none" stroke="#d2e9f5" stroke-width="1.2"/><circle cx="667.9" cy="444.9" r="5.7" fill="#b8dcee"/>
<path d="M661.9,419.8 L673.7,419.8 L667.8,426 Z" fill="#fff"/>
<path d="M354.1,497 L366.7,483.8 L379.3,497 L371.5,497 L366.7,492.2 L362.5,497 Z" fill="#b8dcee"/>
</svg>
<!-- bottom panel -->
<div id="bottom"></div>
<div id="title">n Generator with Random Barcode</div>
<div class="btn" style="left:-67px;top:533.4px">Create</div>
<div class="wt" style="left:65.3px;top:533.4px;letter-spacing:0.3px">up to</div>
<div class="inp" style="left:103px;top:529.2px;width:133px">300</div>
<div class="wt" style="left:243px;top:533.4px">sequences.</div>
<div class="btn" style="left:316.3px;top:533.4px">Prune</div>
<div class="btn" style="left:445px;top:533.4px">GoTo</div>
<div class="inp" style="left:574px;top:529.2px;width:133.3px">4</div>
<div class="btn" style="left:-67px;top:555.3px;height:18px">Delete</div>
<div class="btn" style="left:61.9px;top:555.3px;height:18px">Next</div>
<div class="btn" style="left:190.3px;top:555.3px;height:18px">Prev</div>
<div class="btn" style="left:318.8px;top:555.3px;height:18px">Submit</div>
<div id="seq">GGCUCGAGUAGAGUCGAAAACCCAGAGGCUACUCAAUUUUCCGGUGGCCACCCGCCCGGGCCACCGUUACUCCACUCCACUCCUUCGGGACUGGUUUGGAGGAACAUAACAGGGG
GGUAGUCACUGGCUUCGGCCAGUGACUAGGAAAAGAAACAACAACAACAAC,,false</div>

<!-- devtools -->
<div id="dt">
  <div id="dtbar">
        <div class="vsep" style="left:63.5px"></div>
    <div class="vsep" style="left:113.5px"></div>
    <div class="vsep" style="left:150.3px"></div>
    <div class="vsep" style="left:276px"></div>
    <div class="dtt" style="left:73px;top:4.5px;color:#3c4043">top</div>
    <div class="dtt" style="left:286px;top:4.5px;color:#80868b">3 hidden</div>
    <div class="abs" style="left:5.4px;top:28px;width:156.3px;height:21px;box-sizing:border-box;background:#fff;border:1px solid #d3d5d8;"></div>
    <div class="dtt" style="left:10.3px;top:31.5px;color:#757575">Filter</div>
    <div class="dtt" style="left:170px;top:30.6px;color:#5f6368">Default levels</div>
    <div class="vsep" style="left:263.3px;top:30px;height:16px"></div>
    <div class="abs" style="left:3.2px;top:55.4px;width:105.5px;height:17.2px;box-sizing:border-box;background:#f1f3f4;border:1px solid #cdcfd2;border-radius:2px;"></div>
    <div class="dtt" style="left:12.6px;top:57px;color:#5f6368">27 Issues:</div>
    <div class="dtt" style="left:89px;top:57px;color:#5f6368">27</div>
<svg class="abs" style="left:0;top:0" width="364" height="77" viewBox="801 0 364 77">
<rect x="810.5" y="6.3" width="14" height="11.8" fill="none" stroke="#5f6368" stroke-width="1"/>
<path d="M813.6,6.3 V18.1" stroke="#5f6368" stroke-width="1"/>
<path d="M816.3,8.9 L822.2,12.2 L816.3,15.5 Z" fill="#5f6368"/>
<circle cx="846.4" cy="12" r="5.6" fill="none" stroke="#5f6368" stroke-width="1.6"/>
<path d="M842.4,8 L850.4,16" stroke="#5f6368" stroke-width="1.6"/>
<path d="M898.8,9.3 L905.6,9.3 L902.2,15 Z" fill="#5f6368"/>
<path d="M924.6,12 Q932.8,2.2 941,12 Q932.8,21.8 924.6,12 Z" fill="#5f6368"/>
<circle cx="932.8" cy="12" r="3.3" fill="#f1f3f4"/><circle cx="932.8" cy="12" r="1.9" fill="#5f6368"/>
<path d="M1047.1,34.9 L1054.1,34.9 L1050.6,41.2 Z" fill="#5f6368"/>
<path d="M1150.96,7.33 L1151.00,5.19 L1155.00,5.19 L1155.04,7.33 L1155.93,7.85 L1157.81,6.81 L1159.81,10.28 L1157.97,11.38 L1157.97,12.42 L1159.81,13.52 L1157.81,16.99 L1155.93,15.95 L1155.04,16.47 L1155.00,18.61 L1151.00,18.61 L1150.96,16.47 L1150.07,15.95 L1148.19,16.99 L1146.19,13.52 L1148.03,12.42 L1148.03,11.38 L1146.19,10.28 L1148.19,6.81 L1150.07,7.85 Z" fill="#616161" stroke="#616161" stroke-width="0.6" stroke-linejoin="round"/><circle cx="1153.0" cy="11.9" r="2.7" fill="#f1f3f4"/>
<path d="M876.4,58.6 H885.6 Q886.8,58.6 886.8,59.8 V66.2 Q886.8,67.4 885.6,67.4 H878.6 L875.2,70.2 V59.8 Q875.2,58.6 876.4,58.6 Z" fill="#1a73e8"/>
<path d="M877.6,61.4 H884.4 M877.6,64 H882.4" stroke="#fff" stroke-width="1.1"/>
</svg>
  </div>
<div class="cl" style="top:76.85px">.data:</div>
<div class="lk" style="top:76.85px">VM567:1260</div>
<div class="sep" style="top:91.80px"></div>
<div class="abs" style="top:100.35px;left:27.0px;width:0;height:0;border-top:4.1px solid transparent;border-bottom:4.1px solid transparent;border-left:6.1px solid #545962"></div>
<div class="cl" style="top:97.55px;left:36.4px">Object</div>
<div class="lk" style="top:97.55px">VM567:1261</div>
<div class="sep" style="top:114.00px"></div>
<div class="cl" style="top:118.25px">.data.error:</div>
<div class="lk" style="top:118.25px">VM567:1263</div>
<div class="sep" style="top:133.50px"></div>
<div class="cl" style="top:137.95px">Error – this project doesn't belong</div>
<div class="cl" style="top:151.25px">to any of the lab!</div>
<div class="lk" style="top:137.95px">VM567:1264</div>
<div class="sep" style="top:166.10px"></div>
<div class="cl" style="top:169.55px">completed</div>
<div class="lk" style="top:169.55px">VM567:1281</div>
<div class="sep" style="top:184.90px"></div>
<div class="cl" style="top:189.25px">postDesign: this = [object Object]</div>
<div class="lk" style="top:189.25px">VM567:1286</div>
<div class="sep" style="top:204.10px"></div>
<div class="cl" style="top:207.95px">postDesign: submissionInProgress =</div>
<div class="cl" style="top:221.25px">true</div>
<div class="lk" style="top:207.95px">VM567:1287</div>
<div class="sep" style="top:236.80px"></div>
<div class="cl" style="top:240.65px">whenSubmissionComlete: executing</div>
<div class="cl" style="top:253.95px">function () { [native code] }</div>
<div class="lk" style="top:240.65px">VM567:1214</div>
<div class="sep" style="top:268.60px"></div>
<div class="cl" style="top:273.05px">Submission of line 4 is complete</div>
<div class="lk" style="top:273.05px">VM567:1367</div>
<div class="sep" style="top:287.70px"></div>
<div class="cl" style="top:291.95px">Errors:</div>
<div class="lk" style="top:291.95px">VM567:1240</div>
<div class="sep" style="top:306.80px"></div>
<div class="cl" style="top:310.75px">test #Mutation control: Error – this</div>
<div class="cl" style="top:324.05px">project doesn't belong to any of the lab!</div>
<div class="cl" style="top:337.35px">test #Mutation A122: Error – this project</div>
<div class="cl" style="top:350.65px">doesn't belong to any of the lab!</div>
<div class="cl" style="top:363.95px">test #Mutation C122: Error – this project</div>
<div class="cl" style="top:377.25px">doesn't belong to any of the lab!</div>
<div class="cl" style="top:390.55px">test #Mutation G122: Error – this project</div>
<div class="cl" style="top:403.85px">doesn't belong to any of the lab!</div>
<div class="lk" style="top:310.75px">VM567:1241</div>
<div class="sep" style="top:418.55px"></div>
<div class="cl" style="top:423.05px">Batch submission of 4 designs is</div>
<div class="cl" style="top:436.35px">complete.</div>
<div class="lk" style="top:423.05px">VM567:1384</div>
<div class="sep" style="top:450.80px"></div>
<div class="cl" style="top:455.25px">pollfn done</div>
<div class="lk" style="top:455.25px">VM567:885</div>
<div class="sep" style="top:469.90px"></div>
<div class="cl" style="top:473.65px">enter setState</div>
<div class="lk" style="top:473.65px">VM567:829</div>
<div class="sep" style="top:489.40px"></div>
<div class="cl" style="top:493.65px">index=3</div>
<div class="lk" style="top:493.65px">VM567:833</div>
<div class="sep" style="top:508.80px"></div>
<div class="cl" style="top:512.55px">line=4</div>
<div class="lk" style="top:512.55px">VM567:834</div>
<div class="sep" style="top:527.60px"></div>
<div class="cl" style="top:531.85px">leave setState</div>
<div class="lk" style="top:531.85px">VM567:835</div>
<div class="sep" style="top:546.2px"></div>
  <svg class="abs" style="left:9px;top:550px" width="10" height="12" viewBox="0 0 10 12"><path d="M2,2.6 L6,6.3 L2,10" fill="none" stroke="#2a6df4" stroke-width="1.4"/></svg>
  <div id="drawer">
<svg class="abs" style="left:0;top:0" width="364" height="27" viewBox="801 582.5 364 27">
<circle cx="818.2" cy="592.6" r="1.25" fill="#5f6368"/><circle cx="818.2" cy="597.4" r="1.25" fill="#5f6368"/><circle cx="818.2" cy="602.2" r="1.25" fill="#5f6368"/>
<path d="M1148.6,593 L1157,601.4 M1157,593 L1148.6,601.4" stroke="#5f6368" stroke-width="1.3"/>
</svg>
    <div class="dtt" style="left:38.4px;top:6px;color:#333">Console</div>
    <div class="dtt" style="left:102.4px;top:6px">What's New</div>
    <div class="dtt" style="left:196.4px;top:6px">Issues</div>
  </div>
</div>
<div class="abs" style="left:800.5px;top:0;width:1px;height:609px;background:#c9ccd1"></div>
</body>
</html>
